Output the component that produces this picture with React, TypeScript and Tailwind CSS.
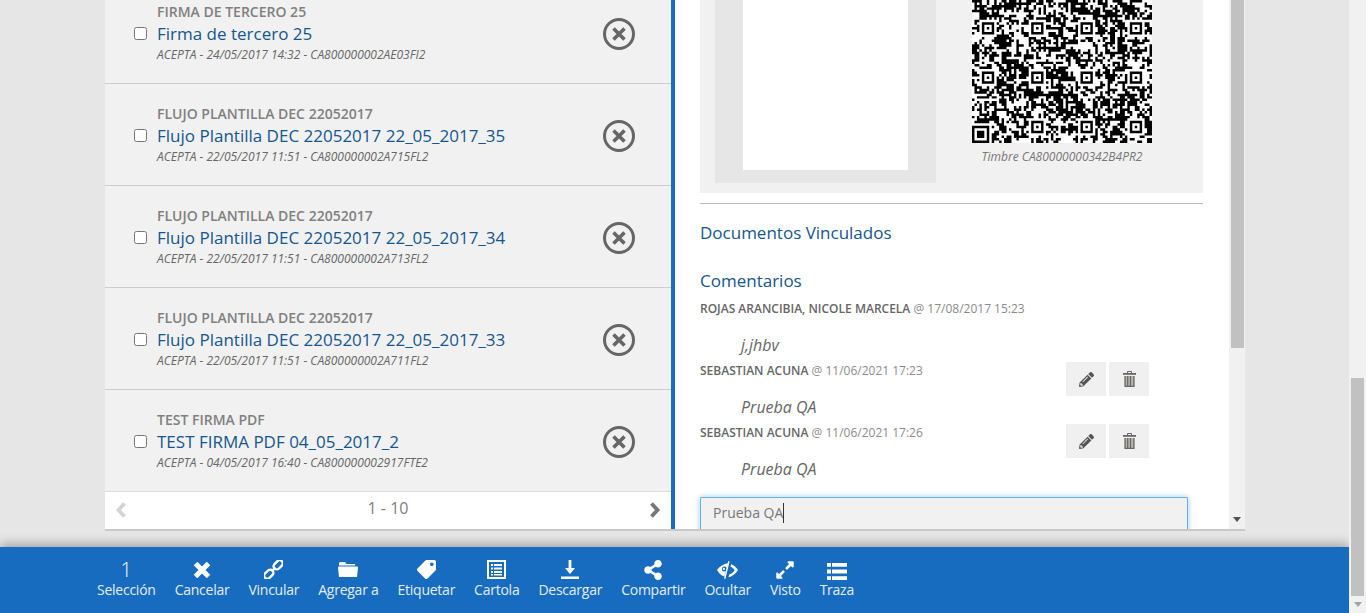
import React from 'react';
import { FaTag, FaShareAlt, FaExpandAlt, FaPencilAlt } from 'react-icons/fa';

const docs = [
  { group: 'FIRMA DE TERCERO 25', title: 'Firma de tercero 25', sub: 'ACEPTA - 24/05/2017 14:32 - CA800000002AE03FI2' },
  { group: 'FLUJO PLANTILLA DEC 22052017', title: 'Flujo Plantilla DEC 22052017 22_05_2017_35', sub: 'ACEPTA - 22/05/2017 11:51 - CA800000002A715FL2' },
  { group: 'FLUJO PLANTILLA DEC 22052017', title: 'Flujo Plantilla DEC 22052017 22_05_2017_34', sub: 'ACEPTA - 22/05/2017 11:51 - CA800000002A713FL2' },
  { group: 'FLUJO PLANTILLA DEC 22052017', title: 'Flujo Plantilla DEC 22052017 22_05_2017_33', sub: 'ACEPTA - 22/05/2017 11:51 - CA800000002A711FL2' },
  { group: 'TEST FIRMA PDF', title: 'TEST FIRMA PDF 04_05_2017_2', sub: 'ACEPTA - 04/05/2017 16:40 - CA800000002917FTE2' },
];

// 2D barcode: fake data modules, real finder and alignment pattern positions
const QR_SIZE = 73;
const qrPath = (() => {
  const cells: boolean[][] = [];
  let seed = 20170817;
  const next = () => {
    seed = (seed * 1664525 + 1013904223) >>> 0;
    return (seed >>> 16) / 65536;
  };
  for (let y = 0; y < QR_SIZE; y++) {
    cells.push([]);
    for (let x = 0; x < QR_SIZE; x++) {
      const prevX = x > 0 ? cells[y][x - 1] : false;
      const prevY = y > 0 ? cells[y - 1][x] : false;
      const bias = (prevX ? 0.08 : -0.05) + (prevY ? 0.08 : -0.05);
      cells[y].push(next() < 0.48 + bias);
    }
  }
  const square = (cx: number, cy: number, r: number) => {
    for (let y = -r - 1; y <= r + 1; y++) {
      for (let x = -r - 1; x <= r + 1; x++) {
        const d = Math.max(Math.abs(x), Math.abs(y));
        const row = cells[cy + y];
        if (row && cx + x >= 0 && cx + x < QR_SIZE) {
          row[cx + x] = r === 3 ? d !== 2 && d !== 4 : d !== 1 && d !== 3;
        }
      }
    }
  };
  for (const cy of [26, 46]) for (const cx of [6, 26, 46, 66]) square(cx, cy, 2);
  for (const cx of [26, 46, 66]) square(cx, 66, 2);
  square(3, 69, 3);
  let d = '';
  cells.forEach((row, y) =>
    row.forEach((on, x) => {
      if (on) d += `M${x} ${y}h1v1h-1z`;
    })
  );
  return d;
})();

const CircleX = () => (
  <svg width="34" height="34" viewBox="0 0 34 34" fill="none" stroke="#666" className="mt-[2px] shrink-0">
    <circle cx="17" cy="17" r="14.5" strokeWidth="3" />
    <path d="M11.500 11.500l11 11M22.500 11.500l-11 11" strokeWidth="3.600" />
  </svg>
);

const TrashIcon = () => (
  <svg width="13" height="16" viewBox="0 0 13 16">
    <path fill="none" stroke="#666" d="M4.500 2V.5h4V2" />
    <path fill="#666" d="M0 2h13v1.800H0z" />
    <path fill="#b9b5ae" d="M1.500 5h10v11h-10z" />
    <path fill="#666" d="M1.500 5h1.200v11H1.500zM4.100 5h1.200v11H4.100zM6.900 5h1.200v11H6.900zM10.300 5h1.200v11h-1.200zM1.500 14.800h10V16h-10z" />
  </svg>
);

const Chevron = ({ left, color }: { left?: boolean; color: string }) => (
  <svg width="12" height="16" viewBox="0 0 12 16" fill="none" stroke={color} strokeWidth="3.800">
    <path d={left ? 'M9.500 1.500L3.500 8l6 6.500' : 'M2.500 1.500L8.500 8l-6 6.500'} />
  </svg>
);

const DocRow = ({ group, title, sub }: (typeof docs)[number]) => (
  <li className="flex h-[102px] items-center border-b border-[#ccc] bg-[#f1f1f1] pl-[29px] pr-[35px]">
    <input type="checkbox" readOnly className="m-0 mt-[2px] h-[13px] w-[13px] shrink-0" />
    <div className="ml-[10px] flex-1 pt-px">
      <div className="text-[14px] leading-[20px] font-semibold text-[#808080]">{group}</div>
      <div className="text-[17px] leading-[24px] text-[#14568f]">{title}</div>
      <div className="text-[12px] leading-[18px] text-[#666] italic">{sub}</div>
    </div>
    <CircleX />
  </li>
);

const Meta = ({ name, date }: { name: string; date: string }) => (
  <div className="text-[12px] leading-[18px] text-[#8c8c8c]">
    <span className="font-semibold text-[#666]">{name}</span> @ {date}
  </div>
);

const Comment = ({ name, date, text, actions }: { name: string; date: string; text: string; actions?: boolean }) => (
  <div className="relative h-[62px]">
    <Meta name={name} date={date} />
    <div className="mt-[16px] pl-[41px] text-[16px] leading-[22px] text-[#666] italic">{text}</div>
    {actions && (
      <div className="absolute top-0 left-[366px] flex gap-[3px]">
        <div className="flex h-[34px] w-[40px] items-center justify-center bg-[#f0f0f0] text-[#555]">
          <FaPencilAlt size={15} />
        </div>
        <div className="flex h-[34px] w-[40px] items-center justify-center bg-[#f0f0f0]">
          <TrashIcon />
        </div>
      </div>
    )}
  </div>
);

const CancelIcon = () => (
  <svg width="18" height="16" viewBox="0 0 18 16" fill="none" stroke="#fff" strokeWidth="5">
    <path d="M2.500 1.500l13 13M15.500 1.500l-13 13" />
  </svg>
);

const LinkIcon = () => (
  <svg width="19" height="19" viewBox="0 0 20 20" fill="none" stroke="#fff" strokeWidth="2.500">
    <g transform="rotate(-45 10 10)">
      <rect x="-2.500" y="6.700" width="11" height="6.600" rx="3.300" />
      <rect x="11.500" y="6.700" width="11" height="6.600" rx="3.300" />
      <path d="M7 10h6" />
    </g>
  </svg>
);

const FolderIcon = () => (
  <svg width="20" height="17" viewBox="0 0 20 17" fill="#fff">
    <path d="M2 1h5l1.500 2H17v1.500H1V2zM1 5.500h18a1 1 0 0 1 1 1L19 16H1L0 6.500a1 1 0 0 1 1-1z" />
  </svg>
);

const ListBoxIcon = () => (
  <svg width="19" height="19" viewBox="0 0 19 19" fill="#fff">
    <path fillRule="evenodd" d="M0 0h19v19H0zM2 2v15h15V2z" />
    <path d="M4 4h2v2H4zM7 4h8v2H7zM4 7.500h2v2H4zM7 7.500h8v2H7zM4 11h2v2H4zM7 11h8v2H7zM4 14h2v1.500H4zM7 14h8v1.500H7z" />
  </svg>
);

const DownloadIcon = () => (
  <svg width="18" height="19" viewBox="0 0 18 19" fill="#fff">
    <path d="M7.600 0h2.800v8h3.600L9 14 4 8h3.600zM0 16.500h18V19H0z" />
  </svg>
);

const HideIcon = () => (
  <svg width="21" height="18" viewBox="0 0 20 17" fill="#fff" className="mt-px">
    <path
      fillRule="evenodd"
      d="M10.500 2C6.300 2.400 2.500 5 0 8.500c1.500 2.800 4 5.300 7 6.300zM7 5.200a2.400 2.400 0 1 0 0 4.800 2.400 2.400 0 0 0 0-4.800z"
    />
    <circle cx="6.500" cy="7.500" r="1.100" />
    <path d="M10.700 0l1.300.3L8 17l-1.300-.3zM13.500 3c2.700 1 5 3 6.500 5.500-2 3.300-5 6-9 7l.7-2.600c2.400-.8 4.100-2.400 5.100-4.400-.9-1.500-2.400-2.700-4-3.400z" />
  </svg>
);

const TraceIcon = () => (
  <svg width="20" height="17" viewBox="0 0 20 17" fill="#fff" className="mt-[3px]">
    <path d="M0 0h4v3.800H0zM5 0h15v3.800H5zM0 6.600h4v3.800H0zM5 6.600h15v3.800H5zM0 13.200h4V17H0zM5 13.200h15V17H5z" />
  </svg>
);

const actions: { label: string; icon: React.ReactNode }[] = [
  { label: 'Selección', icon: <span className="block text-[20px] leading-[21px] font-light text-white">1</span> },
  { label: 'Cancelar', icon: <CancelIcon /> },
  { label: 'Vincular', icon: <LinkIcon /> },
  { label: 'Agregar a', icon: <FolderIcon /> },
  { label: 'Etiquetar', icon: <FaTag size={19} className="-scale-x-100" /> },
  { label: 'Cartola', icon: <ListBoxIcon /> },
  { label: 'Descargar', icon: <DownloadIcon /> },
  { label: 'Compartir', icon: <FaShareAlt size={20} /> },
  { label: 'Ocultar', icon: <HideIcon /> },
  { label: 'Visto', icon: <FaExpandAlt size={20} /> },
  { label: 'Traza', icon: <TraceIcon /> },
];

const ScrollArrow = ({ color }: { color: string }) => (
  <svg width="8" height="5" viewBox="0 0 8 5" fill={color}>
    <path d="M0 0h8L4 5z" />
  </svg>
);

export default function App() {
  return (
    <div className="flex h-[613px] w-full overflow-hidden bg-[#e6e6e6] font-['Open_Sans',sans-serif]">
      <div className="flex min-w-0 flex-1 flex-col">
        <div className="flex h-[529px] shrink-0 pl-[105px] pr-[104px]">
          <div className="flex h-full w-full overflow-hidden bg-white shadow-[0_2px_0_#c8c8c8]">
            <section className="flex w-[566px] shrink-0 flex-col">
              <ul className="-mt-[18px]">
                {docs.map((doc) => (
                  <DocRow key={doc.title} {...doc} />
                ))}
              </ul>
              <div className="-mt-px flex flex-1 items-center justify-between border-t border-[#ddd] pl-[10px] pr-[10px] pb-[2px]">
                <Chevron left color="#d4d4d4" />
                <span className="-mt-[3px] text-[16px] text-[#808080]">1 - 10</span>
                <Chevron color="#777" />
              </div>
            </section>

            <section className="min-w-0 flex-1 overflow-hidden border-l-[4px] border-[#1a6dc0] pl-[25px] pr-[26px]">
              <div className="flex h-[193px] overflow-hidden bg-[#f1f1f1] pl-[15px]">
                <div className="flex h-[183px] w-[221px] shrink-0 justify-center bg-[#e6e6e6]">
                  <div className="h-[170px] w-[165px] bg-white" />
                </div>
                <div className="-mt-[37px] ml-[36px] w-[180px] shrink-0">
                  <svg width="180" height="180" viewBox={`0 0 ${QR_SIZE} ${QR_SIZE}`} className="block bg-white">
                    <path d={qrPath} fill="#000" />
                  </svg>
                  <div className="mt-[5px] text-center text-[12px] leading-[18px] text-[#777] italic">
                    Timbre CA80000000342B4PR2
                  </div>
                </div>
              </div>
              <div className="mt-[10px] h-px bg-[#bbb]" />
              <h3 className="mt-[18px] text-[17px] leading-[22px] text-[#14568f]">Documentos Vinculados</h3>
              <h3 className="mt-[26px] text-[17px] leading-[22px] text-[#14568f]">Comentarios</h3>
              <div className="mt-[8px]">
                <div className="h-[62px]">
                  <Meta name="ROJAS ARANCIBIA, NICOLE MARCELA" date="17/08/2017 15:23" />
                  <div className="mt-[16px] pl-[41px] text-[16px] leading-[22px] text-[#666] italic">j,jhbv</div>
                </div>
                <Comment name="SEBASTIAN ACUNA" date="11/06/2021 17:23" text="Prueba QA" actions />
                <Comment name="SEBASTIAN ACUNA" date="11/06/2021 17:26" text="Prueba QA" actions />
              </div>
              <div className="mt-[11px] flex h-[40px] w-[488px] items-start rounded-[1px] border border-[#66afe9] bg-[#f1f1f1] pl-[12px] pt-[5px] shadow-[0_0_6px_rgba(102,175,233,0.6)]">
                <span className="text-[14px] leading-[20px] text-[#777]">Prueba QA</span>
                <span className="h-[20px] w-px bg-[#333]" />
              </div>
            </section>

            <div className="flex w-[16px] shrink-0 flex-col items-center bg-[#f1f1f1]">
              <div className="h-[348px] w-[13px] bg-[#c1c1c1]" />
              <div className="mt-auto mb-[7px]">
                <ScrollArrow color="#505050" />
              </div>
            </div>
          </div>
        </div>
        <div className="flex-1" />
        <nav className="flex h-[66px] shrink-0 gap-[19px] bg-[#186cbf] pl-[97px] pt-[12px] shadow-[0_-3px_10px_rgba(0,0,0,0.3)]">
          {actions.map((a) => (
            <div key={a.label} className="flex flex-col items-center text-[#fff]">
              <div className="flex h-[21px] items-center">{a.icon}</div>
              <span className="text-[14px] leading-[20px] tracking-[-0.25px] text-[#e3edf7]">{a.label}</span>
            </div>
          ))}
        </nav>
      </div>

      <div className="relative z-10 flex w-[17px] shrink-0 flex-col items-center bg-[#f1f1f1]">
        <div className="mt-[378px] h-[218px] w-[13px] bg-[#c1c1c1]" />
        <div className="mt-[6px]">
          <ScrollArrow color="#a3a3a3" />
        </div>
      </div>
    </div>
  );
}
